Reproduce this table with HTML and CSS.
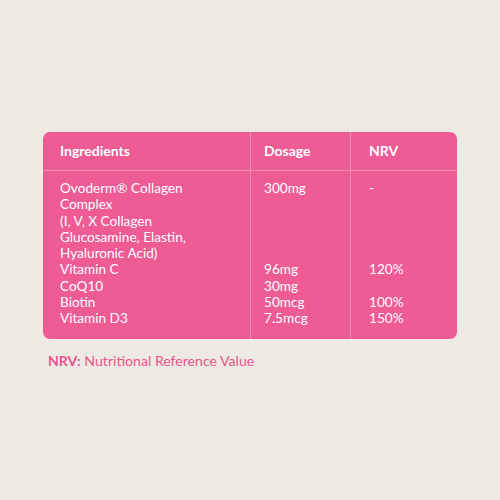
FILE: index.html
```html
<!DOCTYPE html>
<html>
<head>
<meta charset="utf-8">
<link rel="stylesheet" href="styles.css">
</head>
<body>
<div class="wrap">
  <table class="nutri">
    <colgroup><col class="k1"><col class="k2"><col class="k3"></colgroup>
    <thead>
      <tr><th>Ingredients</th><th>Dosage</th><th>NRV</th></tr>
    </thead>
    <tbody>
      <tr>
        <td>Ovoderm® Collagen<br>Complex<br>(I, V, X Collagen<br>Glucosamine, Elastin,<br>Hyaluronic Acid)<br>Vitamin C<br>CoQ10<br>Biotin<br>Vitamin D3</td>
        <td>300mg<br><br><br><br><br>96mg<br>30mg<br>50mcg<br>7.5mcg</td>
        <td>-<br><br><br><br><br>120%<br><br>100%<br>150%</td>
      </tr>
    </tbody>
  </table>
  <p class="note"><b>NRV:</b> Nutritional Reference Value</p>
</div>
</body>
</html>
```
FILE: styles.css
```css
html, body { margin: 0; padding: 0; }
body {
  width: 500px; height: 500px;
  background: #eeeae3;
  font-family: "Lato", "Inter", sans-serif;
}
.wrap { padding: 132px 43px 0 43px; }
.nutri {
  width: 414px;
  table-layout: fixed;
  border-collapse: separate;
  border-spacing: 0;
  background: #ef5b95;
  border-radius: 7px;
  color: #fff;
  font-size: 13.6px;
  line-height: 16.3px;
  text-align: left;
}
.k1 { width: 207px; }
.k2 { width: 100px; }
.k3 { width: 107px; }
.nutri th, .nutri td { box-sizing: border-box; }
.nutri th {
  font-weight: 700;
  font-size: 14px;
  height: 39px;
  padding: 0 0 0 17px;
  border-bottom: 1px solid #f48cb6;
  vertical-align: middle;
}
.nutri td {
  padding: 9px 0 12px 17px;
  vertical-align: top;
}
.nutri th + th, .nutri td + td { border-left: 1px solid #f48cb6; }
.nutri th:nth-child(2), .nutri td:nth-child(2) { padding-left: 13px; }
.nutri th:nth-child(3), .nutri td:nth-child(3) { padding-left: 18px; }
.note {
  margin: 13px 0 0 5px;
  color: #e8548f;
  font-size: 14.1px;
}
.note b { font-weight: 700; }
```
